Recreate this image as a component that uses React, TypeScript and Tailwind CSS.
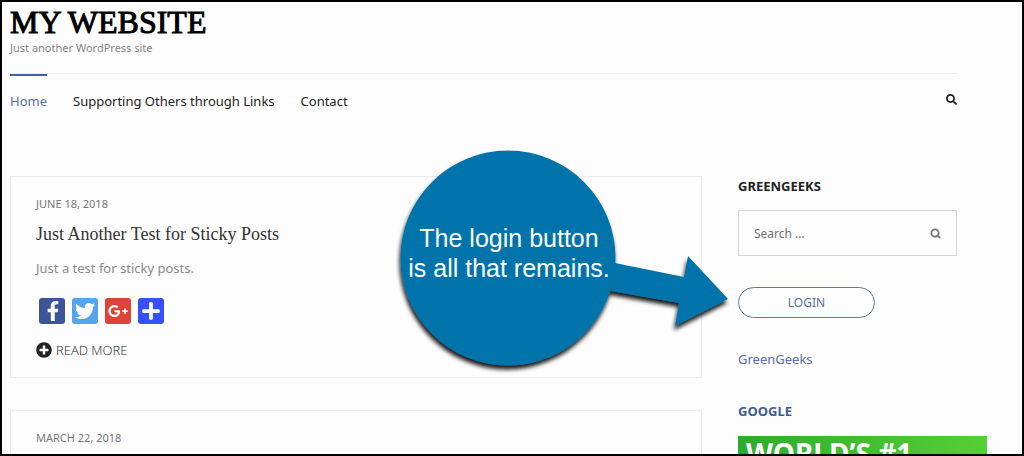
import type { ComponentType } from "react";
import { Search } from "lucide-react";
import { FaFacebookF, FaGooglePlusG, FaPlus, FaPlusCircle, FaSearch, FaTwitter } from "react-icons/fa";

type Share = {
  name: string;
  tone: string;
  Icon: ComponentType<{ className?: string }>;
};

const shares: Share[] = [
  { name: "Facebook", tone: "bg-[#3b5598] pl-[2px]", Icon: FaFacebookF },
  { name: "Twitter", tone: "bg-[#55a4ee]", Icon: FaTwitter },
  { name: "Google Plus", tone: "bg-[#db4437]", Icon: FaGooglePlusG },
  { name: "Share", tone: "bg-[#3550fb]", Icon: FaPlus },
];

const links = ["Supporting Others through Links", "Contact"];

function Header() {
  return (
    <header>
      <h1 className="font-['Liberation_Serif',serif] text-[32px] leading-9 text-black [-webkit-text-stroke:1px_black]">
        MY WEBSITE
      </h1>
      <p className="text-[11px] leading-4 text-[#858585]">Just another WordPress site</p>
      <nav className="mt-[17px] flex items-start border-t border-[#ececec] text-[13px] leading-5 text-[#222]">
        <a href="#home" className="border-t-2 border-[#3f62a5] pt-[15px] text-[#5870a8]">
          Home
        </a>
        {links.map((label) => (
          <a key={label} href="#page" className="ml-[26px] pt-[17px]">
            {label}
          </a>
        ))}
        <button type="button" aria-label="Open search" className="mt-5 ml-auto">
          <FaSearch className="size-[11px]" />
        </button>
      </nav>
    </header>
  );
}

function Posts() {
  return (
    <main className="flex flex-col gap-8">
      <article className="border border-[#ececec] px-[25px] pt-[19px] pb-[17px]">
        <time className="block text-[11px] leading-4 text-[#777]">JUNE 18, 2018</time>
        <h2 className="mt-2 font-['Liberation_Serif',serif] text-[18px] leading-7 text-[#333]">
          Just Another Test for Sticky Posts
        </h2>
        <p className="mt-[10px] text-[13px] leading-5 text-[#8a8a8a]">Just a test for sticky posts.</p>
        <div className="mt-5 flex gap-[7px] pl-[3px]">
          {shares.map(({ name, tone, Icon }) => (
            <button
              key={name}
              type="button"
              aria-label={name}
              className={`flex size-[26px] items-center justify-center rounded-[3px] text-white ${tone}`}
            >
              <Icon className="size-5" />
            </button>
          ))}
        </div>
        <a
          href="#post"
          className="mt-4 flex items-center gap-1 font-['Open_Sans',sans-serif] text-[13px] leading-5 font-light text-[#222]"
        >
          <FaPlusCircle className="size-4" />
          READ MORE
        </a>
      </article>
      <article className="border border-[#ececec] px-[25px] pt-[19px] pb-16">
        <time className="block text-[11px] leading-4 text-[#777]">MARCH 22, 2018</time>
      </article>
    </main>
  );
}

function Sidebar() {
  return (
    <aside className="flex flex-col items-start text-[13px] leading-5">
      <h2 className="font-bold text-[#222]">GREENGEEKS</h2>
      <form role="search" className="mt-[14px] flex w-full items-center border border-[#d6d6d6] px-[15px]">
        <input
          type="text"
          aria-label="Search"
          placeholder="Search …"
          className="h-11 min-w-0 flex-1 text-[12px] outline-none placeholder:text-[#707070]"
        />
        <button type="button" aria-label="Search" className="text-[#777]">
          <Search className="size-[11px]" strokeWidth={4} />
        </button>
      </form>
      <button
        type="button"
        className="mt-[31px] h-[31px] w-[137px] rounded-full border border-[#6078a6] text-[12px] text-[#5870a0]"
      >
        LOGIN
      </button>
      <a href="#greengeeks" className="mt-[31px] text-[#5870a8]">
        GreenGeeks
      </a>
      <h2 className="mt-8 font-bold text-[#3d5a97]">GOOGLE</h2>
      <a
        href="#hosting"
        className="mt-[15px] block w-[249px] bg-linear-to-r from-[#2cac2c] to-[#56cf35] pt-[3px] pb-8 pl-2 text-[28px] leading-7 font-bold text-white"
      >
        WORLD’S #1
      </a>
    </aside>
  );
}

function Callout() {
  return (
    <div className="absolute top-[148px] left-[398px] h-[230px] w-[340px]">
      <svg viewBox="0 0 340 230" className="absolute inset-0 size-full overflow-visible" aria-hidden="true">
        <defs>
          <filter id="shade" x="-10%" y="-10%" width="120%" height="120%">
            <feDropShadow dx="-1" dy="4" stdDeviation="2" floodColor="#000" floodOpacity="0.9" />
          </filter>
        </defs>
        <g fill="#0073ab" filter="url(#shade)">
          <circle cx="108" cy="108" r="107.5" />
          <path d="M205 111 284 127 288 106 328 149 275 176 279 153 200 139Z" />
        </g>
      </svg>
      <p className="relative w-[218px] pt-[73px] text-center font-['Liberation_Sans',sans-serif] text-[25px] leading-[30px] whitespace-nowrap text-white">
        The login button
        <br />
        is all that remains.
      </p>
    </div>
  );
}

export default function App() {
  return (
    <div className="relative h-screen overflow-hidden border-2 border-black bg-[#fdfdfd] font-['Noto_Sans',sans-serif]">
      <div className="pt-[2px] pr-[65px] pl-2">
        <Header />
        <div className="mt-[65px] grid grid-cols-[minmax(0,1fr)_219px] gap-9">
          <Posts />
          <Sidebar />
        </div>
      </div>
      <Callout />
    </div>
  );
}
